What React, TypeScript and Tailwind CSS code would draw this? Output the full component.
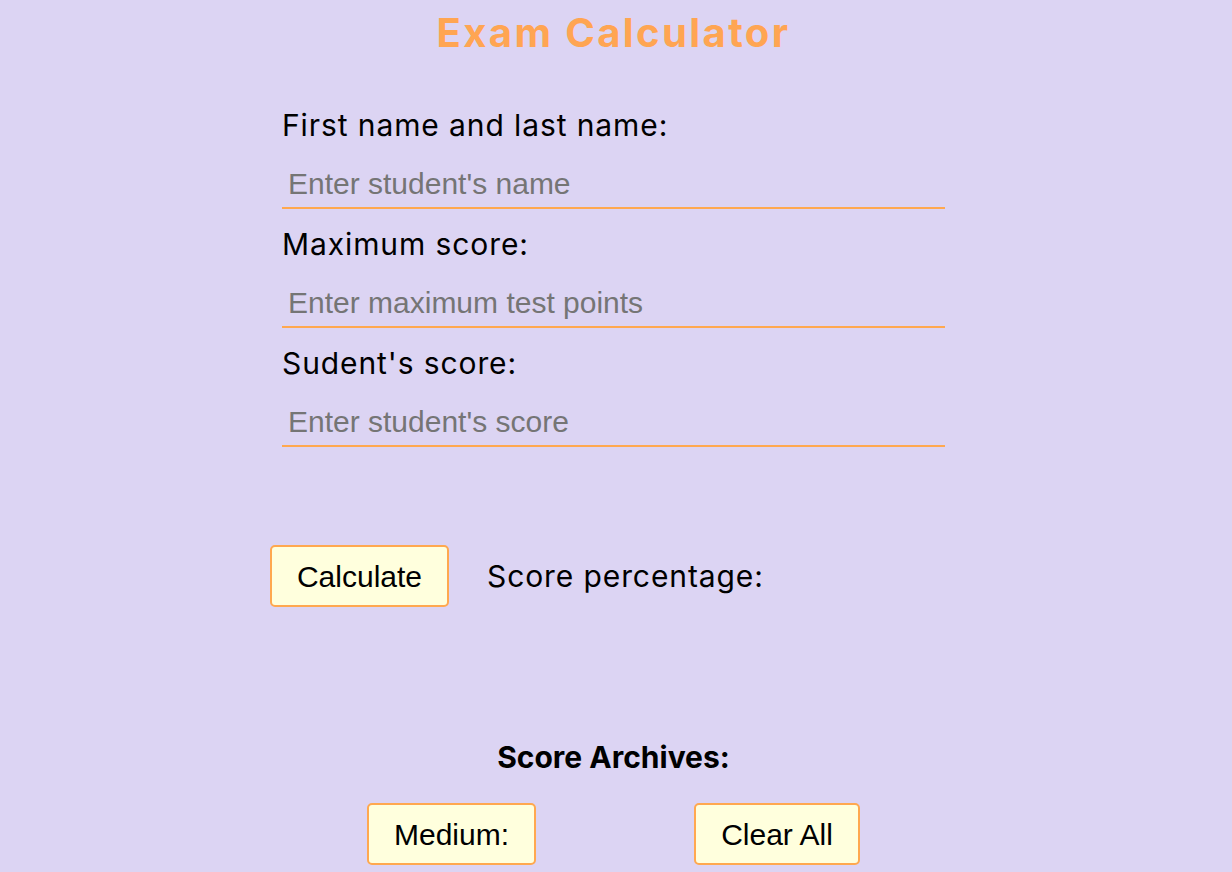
import React from "react";

const labelCls =
  "block h-[36px] leading-[36px] text-[30px] text-black font-['Inter',sans-serif] tracking-[0.9px]";
const inputCls =
  "block w-full h-[50px] pl-[6px] pr-[5px] pt-[2px] bg-transparent border-0 border-b-2 border-[#FFA84F] outline-none text-[30px] font-['Liberation_Sans',Arial,sans-serif] text-black placeholder:text-[#757575]";
const btnCls =
  "h-[62px] border-2 border-[#FFA84F] rounded-[5px] bg-[#FFFFDD] text-[30px] text-black font-['Liberation_Sans',Arial,sans-serif]";

export default function App() {
  return (
    <div className="min-h-[872px] w-full bg-[#DCD4F3] pr-[5px]">
      <h1 className="pt-[8px] h-[58px] leading-[50px] text-center text-[40px] font-bold tracking-[2.4px] text-[#FFA552] font-['Inter',sans-serif]">
        Exam Calculator
      </h1>
      <div className="mx-auto w-[663px] pt-[49px]">
        <label className={labelCls}>First name and last name:</label>
        <input className={`${inputCls} mt-[16px]`} placeholder="Enter student's name" />
        <label className={`${labelCls} mt-[17px]`}>Maximum score:</label>
        <input className={`${inputCls} mt-[16px]`} placeholder="Enter maximum test points" />
        <label className={`${labelCls} mt-[17px]`}>Sudent's score:</label>
        <input className={`${inputCls} mt-[16px]`} placeholder="Enter student's score" />
      </div>
      <div className="mx-auto w-[687px] mt-[98px] flex items-center">
        <button className={`${btnCls} w-[179px]`}>Calculate</button>
        <span className="ml-[38px] text-[30px] tracking-[0.9px] text-black font-['Inter',sans-serif]">
          Score percentage:
        </span>
      </div>
      <div className="mt-[132px] text-center text-[30px] font-bold text-black font-['Inter',sans-serif] leading-[36px]">
        Score Archives:
      </div>
      <div className="mt-[28px] flex justify-center gap-[158px]">
        <button className={`${btnCls} w-[169px]`}>Medium:</button>
        <button className={`${btnCls} w-[166px]`}>Clear All</button>
      </div>
    </div>
  );
}
